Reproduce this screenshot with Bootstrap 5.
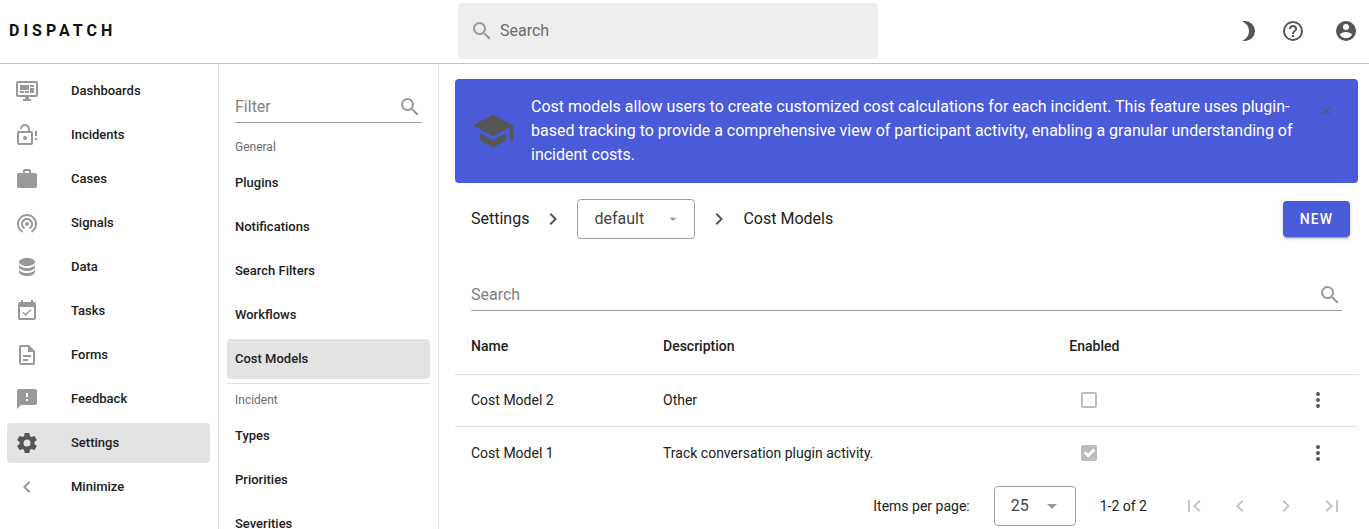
<!DOCTYPE html>
<html lang="en">
<head>
<meta charset="utf-8">
<meta name="viewport" content="width=device-width, initial-scale=1">
<title>Dispatch - Cost Models</title>
<link rel="stylesheet" href="https://cdn.jsdelivr.net/npm/bootstrap@5.3.0/dist/css/bootstrap.min.css">
<style>
:root { --ink: #212121; --muted: #999; --icon: #565656; --accent: #4a5bd9; --rule: #e0e0e0; }
body { font-family: Roboto, "Liberation Sans", sans-serif; font-size: 16px; line-height: 24px; color: var(--ink); background: #fff; }
svg { display: block; fill: currentColor; fill-rule: evenodd; flex: none; }
.ic { width: 24px; height: 24px; }
.text-icon { color: var(--icon); }
.text-faded { color: var(--muted); }
.topbar { height: 64px; border-bottom: 1px solid #c6c6c6; padding: 0 11px 2px 9px; }
.brand { flex: 0 1 449px; font-weight: 700; letter-spacing: 4px; color: #111; text-decoration: none; }
.top-search { flex: 0 1 420px; height: 56px; background: #eee; padding: 0 12px; gap: 6px; border-radius: 4px; }
.top-actions { gap: 21px; }
.plain-input { border: 0; outline: 0; background: transparent; padding: 0; min-width: 0; flex: 1; color: var(--ink); }
.plain-input::placeholder { color: #828282; opacity: 1; }
.top-search .plain-input::placeholder { color: #6c6c6c; }
.icon-button { border: 0; background: none; padding: 0; color: var(--icon); display: inline-flex; align-items: center; justify-content: center; vertical-align: middle; }
.side { flex: 0 0 220px; border-right: 1px solid var(--rule); overflow-y: auto; scrollbar-width: none; padding: 7px 8px; }
.side::-webkit-scrollbar { display: none; }
.side-main { flex-basis: 219px; padding-left: 7px; }
.side-link { display: flex; align-items: center; height: 40px; margin-bottom: 4px; padding: 0 8px; border-radius: 4px; font-size: 13px; font-weight: 500; line-height: 20px; color: var(--ink); text-decoration: none; flex: none; }
.side-link svg { color: var(--muted); margin-right: 32px; }
.side-link.active { background: #e3e3e3; }
.side-link.active svg { color: var(--icon); }
.side-label { height: 32px; padding: 0 8px; display: flex; align-items: center; font-size: 12px; line-height: 16px; color: #6c6c6c; margin: 0; flex: none; font-weight: 400; }
.side-group + .side-group { border-top: 1px solid var(--rule); }
.line-field { border-bottom: 1px solid #a0a0a0; height: 32px; }
.side .line-field { margin: 20px 8px 8px; }
.content-area { padding: 15px 11px 0 16px; overflow: hidden; min-width: 0; }
.notice { background: var(--accent); color: #fff; padding: 16px; border-radius: 4px; gap: 16px; margin: 0; border: 0; }
.notice-icon { width: 44px; height: 44px; color: var(--icon); }
.notice-close { width: 32px; height: 32px; }
.crumbs { gap: 12px; padding: 16px 8px 0 16px; }
.crumbs a { color: var(--ink); text-decoration: none; }
.pick { width: auto; height: 40px; border: 1px solid #a0a0a0; border-radius: 4px; color: #444; padding: 0 16px; background: no-repeat url("data:image/svg+xml,%3Csvg xmlns='http://www.w3.org/2000/svg' viewBox='0 0 24 24' fill='%23999'%3E%3Cpath d='M7 10l5 5 5-5z'/%3E%3C/svg%3E") right 13px center / 16px; }
.pick-project { width: 118px; }
.pick-size { width: 82px; background-size: 24px; background-position: right 11px center; }
.btn-new { --bs-btn-color: #fff; --bs-btn-bg: var(--accent); --bs-btn-hover-bg: #3f50cb; --bs-btn-hover-color: #fff; height: 36px; padding: 0 17px; border: 0; border-radius: 4px; font-size: 14px; font-weight: 500; letter-spacing: 1px; box-shadow: 0 3px 1px -2px #0003, 0 2px 2px #0002, 0 1px 5px #0002; }
.table-search { margin: 40px 16px 7px; }
.models { font-size: 14px; line-height: 20px; --bs-table-color: var(--ink); color: var(--ink); margin: 0; table-layout: fixed; }
.models th, .models td { padding: 0 16px; height: 52px; border: 0; vertical-align: middle; }
.models th { font-weight: 500; height: 56px; }
.models tr:last-child td { height: 54px; }
.models thead tr, .models tbody tr:not(:last-child) { border-bottom: 1px solid var(--rule); }
.col-name { width: 192px; }
.col-desc { width: 45%; }
.tick { width: 16px; height: 16px; margin: 0 0 0 12px; display: block; border: 2px solid #bdbdbd; border-radius: 2px; }
.tick.form-check-input[type=checkbox] { border-radius: 2px; }
.tick.form-check-input:disabled { opacity: 1; }
.tick.form-check-input:checked { background-color: #bdbdbd; border-color: #bdbdbd; background-size: 18px; background-position: center; }
.pager { font-size: 14px; line-height: 20px; padding: 6px 3px 8px; }
.pager .icon-button { width: 46px; height: 40px; color: #c6c6c6; }
</style>
</head>
<body class="vh-100 d-flex flex-column overflow-hidden">
<header class="topbar d-flex align-items-center flex-shrink-0">
  <a class="brand" href="#">DISPATCH</a>
  <label class="top-search d-flex align-items-center">
    <svg class="ic text-faded" viewBox="0 0 24 24"><path id="magnify" d="M9.5,3A6.5,6.5 0 0,1 16,9.5C16,11.11 15.41,12.59 14.44,13.73L14.71,14H15.5L20.5,19L19,20.5L14,15.5V14.71L13.73,14.44C12.59,15.41 11.11,16 9.5,16A6.5,6.5 0 0,1 3,9.5A6.5,6.5 0 0,1 9.5,3M9.5,5C7,5 5,7 5,9.5C5,12 7,14 9.5,14C12,14 14,12 14,9.5C14,7 12,5 9.5,5Z"/></svg>
    <input class="plain-input" type="text" placeholder="Search" aria-label="Search">
  </label>
  <div class="top-actions d-flex align-items-center ms-auto">
    <button class="icon-button" type="button" aria-label="Dark mode"><svg class="ic" viewBox="0 0 24 24"><path d="M9,2C7.95,2 6.95,2.16 6,2.46C10.06,3.73 13,7.5 13,12C13,16.5 10.06,20.27 6,21.54C6.95,21.84 7.95,22 9,22A10,10 0 0,0 19,12A10,10 0 0,0 9,2Z"/></svg></button>
    <button class="icon-button me-2" type="button" aria-label="Help"><svg class="ic" viewBox="0 0 24 24"><path d="M11,18H13V16H11V18M12,2A10,10 0 0,0 2,12A10,10 0 0,0 12,22A10,10 0 0,0 22,12A10,10 0 0,0 12,2M12,20C7.59,20 4,16.41 4,12C4,7.59 7.59,4 12,4C16.41,4 20,7.59 20,12C20,16.41 16.41,20 12,20M12,6A4,4 0 0,0 8,10H10A2,2 0 0,1 12,8A2,2 0 0,1 14,10C14,12 11,11.75 11,15H13C13,12.75 16,12.5 16,10A4,4 0 0,0 12,6Z"/></svg></button>
    <button class="icon-button" type="button" aria-label="Account"><svg class="ic" viewBox="0 0 24 24"><path d="M12,19.2C9.5,19.2 7.29,17.92 6,16C6.03,14 10,12.9 12,12.9C14,12.9 17.97,14 18,16C16.71,17.92 14.5,19.2 12,19.2M12,5A3,3 0 0,1 15,8A3,3 0 0,1 12,11A3,3 0 0,1 9,8A3,3 0 0,1 12,5M12,2A10,10 0 0,0 2,12A10,10 0 0,0 12,22A10,10 0 0,0 22,12C22,6.47 17.5,2 12,2Z"/></svg></button>
  </div>
</header>

<div class="d-flex flex-grow-1 overflow-hidden">
  <nav class="side side-main" aria-label="Main">
    <a class="side-link" href="#"><svg class="ic" viewBox="0 0 24 24"><path d="M21,16V4H3V16H21M21,2A2,2 0 0,1 23,4V16A2,2 0 0,1 21,18H14V20H16V22H8V20H10V18H3C1.89,18 1,17.1 1,16V4C1,2.89 1.89,2 3,2H21M5,6H14V11H5V6M15,6H19V8H15V6M19,9V14H15V9H19M5,12H9V14H5V12M10,12H14V14H10V12Z"/></svg>Dashboards</a>
    <a class="side-link" href="#"><svg class="ic" viewBox="0 0 24 24"><path d="M10,13A2,2 0 0,1 10,17A2,2 0 0,1 10,13M16,20V10H4V20H16M16,8A2,2 0 0,1 18,10V20A2,2 0 0,1 16,22H4A2,2 0 0,1 2,20V10A2,2 0 0,1 4,8H13V6A3,3 0 0,0 7,6H5A5,5 0 0,1 15,6V8H16M20,8H22V13H20V8M20,15H22V17H20V15Z"/></svg>Incidents</a>
    <a class="side-link" href="#"><svg class="ic" viewBox="0 0 24 24"><path d="M10,2H14A2,2 0 0,1 16,4V6H20A2,2 0 0,1 22,8V19A2,2 0 0,1 20,21H4C2.89,21 2,20.1 2,19V8C2,6.89 2.89,6 4,6H8V4C8,2.89 8.89,2 10,2M14,6V4H10V6H14Z"/></svg>Cases</a>
    <a class="side-link" href="#"><svg class="ic" viewBox="0 0 24 24"><path d="M12 11c-1.1 0-2 .9-2 2s.9 2 2 2 2-.9 2-2-.9-2-2-2zm6 2c0-3.31-2.69-6-6-6s-6 2.69-6 6c0 2.22 1.21 4.15 3 5.19l1-1.74c-1.19-.7-2-1.97-2-3.45 0-2.21 1.79-4 4-4s4 1.79 4 4c0 1.48-.81 2.75-2 3.45l1 1.74c1.79-1.04 3-2.97 3-5.19zM12 3C6.48 3 2 7.48 2 13c0 3.7 2.01 6.92 4.99 8.65l1-1.73C5.61 18.53 4 15.96 4 13c0-4.42 3.58-8 8-8s8 3.58 8 8c0 2.96-1.61 5.53-4 6.92l1 1.73c2.99-1.73 5-4.95 5-8.65 0-5.52-4.48-10-10-10z"/></svg>Signals</a>
    <a class="side-link" href="#"><svg class="ic" viewBox="0 0 24 24"><path d="M12,3C7.58,3 4,4.79 4,7C4,9.21 7.58,11 12,11C16.42,11 20,9.21 20,7C20,4.79 16.42,3 12,3M4,9V12C4,14.21 7.58,16 12,16C16.42,16 20,14.21 20,12V9C20,11.21 16.42,13 12,13C7.58,13 4,11.21 4,9M4,14V17C4,19.21 7.58,21 12,21C16.42,21 20,19.21 20,17V14C20,16.21 16.42,18 12,18C7.58,18 4,16.21 4,14Z"/></svg>Data</a>
    <a class="side-link" href="#"><svg class="ic" viewBox="0 0 24 24"><path d="M19,3H18V1H16V3H8V1H6V3H5A2,2 0 0,0 3,5V19A2,2 0 0,0 5,21H19A2,2 0 0,0 21,19V5A2,2 0 0,0 19,3M19,19H5V8H19V19M16.53,11.06L15.47,10L10.59,14.88L8.47,12.76L7.41,13.82L10.59,17L16.53,11.06Z"/></svg>Tasks</a>
    <a class="side-link" href="#"><svg class="ic" viewBox="0 0 24 24"><path d="M6,2A2,2 0 0,0 4,4V20A2,2 0 0,0 6,22H18A2,2 0 0,0 20,20V8L14,2H6M6,4H13V9H18V20H6V4M8,12V14H16V12H8M8,16V18H13V16H8Z"/></svg>Forms</a>
    <a class="side-link" href="#"><svg class="ic" viewBox="0 0 24 24"><path d="M13,10H11V6H13V10M13,14H11V12H13V14M20,2H4A2,2 0 0,0 2,4V22L6,18H20A2,2 0 0,0 22,16V4C22,2.89 21.1,2 20,2Z"/></svg>Feedback</a>
    <a class="side-link active" href="#" aria-current="page"><svg class="ic" viewBox="0 0 24 24"><path d="M12,15.5A3.5,3.5 0 0,1 8.5,12A3.5,3.5 0 0,1 12,8.5A3.5,3.5 0 0,1 15.5,12A3.5,3.5 0 0,1 12,15.5M19.43,12.97C19.47,12.65 19.5,12.33 19.5,12C19.5,11.67 19.47,11.34 19.43,11L21.54,9.37C21.73,9.22 21.78,8.95 21.66,8.73L19.66,5.27C19.54,5.05 19.27,4.96 19.05,5.05L16.56,6.05C16.04,5.66 15.5,5.32 14.87,5.07L14.5,2.42C14.46,2.18 14.25,2 14,2H10C9.75,2 9.54,2.18 9.5,2.42L9.13,5.07C8.5,5.32 7.96,5.66 7.44,6.05L4.95,5.05C4.73,4.96 4.46,5.05 4.34,5.27L2.34,8.73C2.21,8.95 2.27,9.22 2.46,9.37L4.57,11C4.53,11.34 4.5,11.67 4.5,12C4.5,12.33 4.53,12.65 4.57,12.97L2.46,14.63C2.27,14.78 2.21,15.05 2.34,15.27L4.34,18.73C4.46,18.95 4.73,19.03 4.95,18.95L7.44,17.94C7.96,18.34 8.5,18.68 9.13,18.93L9.5,21.58C9.54,21.82 9.75,22 10,22H14C14.25,22 14.46,21.82 14.5,21.58L14.87,18.93C15.5,18.67 16.04,18.34 16.56,17.94L19.05,18.95C19.27,19.03 19.54,18.95 19.66,18.73L21.66,15.27C21.78,15.05 21.73,14.78 21.54,14.63L19.43,12.97Z"/></svg>Settings</a>
    <a class="side-link" href="#"><svg class="ic" viewBox="0 0 24 24"><path d="M15.41,16.58L10.83,12L15.41,7.41L14,6L8,12L14,18L15.41,16.58Z"/></svg>Minimize</a>
  </nav>

  <nav class="side" aria-label="Settings">
    <label class="line-field d-flex align-items-center">
      <input class="plain-input" type="text" placeholder="Filter" aria-label="Filter">
      <svg class="ic text-faded" viewBox="0 0 24 24"><use href="#magnify"/></svg>
    </label>
    <div class="side-group">
      <h2 class="side-label">General</h2>
      <a class="side-link" href="#">Plugins</a>
      <a class="side-link" href="#">Notifications</a>
      <a class="side-link" href="#">Search Filters</a>
      <a class="side-link" href="#">Workflows</a>
      <a class="side-link active" href="#" aria-current="page">Cost Models</a>
    </div>
    <div class="side-group">
      <h2 class="side-label">Incident</h2>
      <a class="side-link" href="#">Types</a>
      <a class="side-link" href="#">Priorities</a>
      <a class="side-link" href="#">Severities</a>
    </div>
  </nav>

  <main class="content-area flex-grow-1">
    <div class="alert notice d-flex align-items-start" role="alert">
      <svg class="notice-icon align-self-center" viewBox="0 0 24 24"><path d="M12,3L1,9L12,15L21,10.09V17H23V9M5,13.18V17.18L12,21L19,17.18V13.18L12,17L5,13.18Z"/></svg>
      <div class="flex-grow-1">Cost models allow users to create customized cost calculations for each incident. This feature uses plugin-based tracking to provide a comprehensive view of participant activity, enabling a granular understanding of incident costs.</div>
      <button class="icon-button notice-close flex-shrink-0" type="button" aria-label="Close"><svg width="14" height="14" viewBox="0 0 24 24"><path d="M19,6.41L17.59,5L12,10.59L6.41,5L5,6.41L10.59,12L5,17.59L6.41,19L12,13.41L17.59,19L19,17.59L13.41,12L19,6.41Z"/></svg></button>
    </div>

    <div class="crumbs d-flex align-items-center">
      <a href="#">Settings</a>
      <svg class="ic text-icon" viewBox="0 0 24 24"><path id="next" d="M8.59,16.58L13.17,12L8.59,7.41L10,6L16,12L10,18L8.59,16.58Z"/></svg>
      <select class="form-select pick pick-project" aria-label="Project"><option>default</option></select>
      <svg class="ic text-icon" viewBox="0 0 24 24"><use href="#next"/></svg>
      <span>Cost Models</span>
      <button class="btn btn-new ms-auto" type="button">NEW</button>
    </div>

    <label class="line-field table-search d-flex align-items-center">
      <input class="plain-input" type="text" placeholder="Search" aria-label="Search cost models">
      <svg class="ic text-faded" viewBox="0 0 24 24"><use href="#magnify"/></svg>
    </label>

    <table class="table models">
      <thead><tr><th class="col-name" scope="col">Name</th><th class="col-desc" scope="col">Description</th><th scope="col">Enabled</th><th scope="col" aria-label="Actions"></th></tr></thead>
      <tbody>
        <tr>
          <td>Cost Model 2</td><td>Other</td>
          <td><input class="form-check-input tick" type="checkbox" disabled aria-label="Cost Model 2 enabled"></td>
          <td class="text-end"><button class="icon-button" type="button" aria-label="Cost Model 2 actions"><svg width="48" height="24" viewBox="0 0 48 24"><path id="dots" d="M24,16A2,2 0 0,1 24,20A2,2 0 0,1 24,16M24,10A2,2 0 0,1 24,14A2,2 0 0,1 24,10M24,4A2,2 0 0,1 24,8A2,2 0 0,1 24,4Z"/></svg></button></td>
        </tr>
        <tr>
          <td>Cost Model 1</td><td>Track conversation plugin activity.</td>
          <td><input class="form-check-input tick" type="checkbox" checked disabled aria-label="Cost Model 1 enabled"></td>
          <td class="text-end"><button class="icon-button" type="button" aria-label="Cost Model 1 actions"><svg width="48" height="24" viewBox="0 0 48 24"><use href="#dots"/></svg></button></td>
        </tr>
      </tbody>
    </table>

    <div class="pager d-flex align-items-center justify-content-end">
      <label for="page-size" class="me-4">Items per page:</label>
      <select id="page-size" class="form-select pick pick-size me-4"><option>25</option></select>
      <span class="me-4">1-2 of 2</span>
      <button class="icon-button" type="button" disabled aria-label="First page"><svg class="ic" viewBox="0 0 24 24"><path d="M18.41,16.59L13.82,12L18.41,7.41L17,6L11,12L17,18L18.41,16.59M6,6H8V18H6V6Z"/></svg></button>
      <button class="icon-button" type="button" disabled aria-label="Previous page"><svg class="ic" viewBox="0 0 24 24"><path d="M15.41,16.58L10.83,12L15.41,7.41L14,6L8,12L14,18L15.41,16.58Z"/></svg></button>
      <button class="icon-button" type="button" disabled aria-label="Next page"><svg class="ic" viewBox="0 0 24 24"><use href="#next"/></svg></button>
      <button class="icon-button" type="button" disabled aria-label="Last page"><svg class="ic" viewBox="0 0 24 24"><path d="M5.59,7.41L10.18,12L5.59,16.59L7,18L13,12L7,6L5.59,7.41M16,6H18V18H16V6Z"/></svg></button>
    </div>
  </main>
</div>
<script src="https://cdn.jsdelivr.net/npm/bootstrap@5.3.0/dist/js/bootstrap.bundle.min.js"></script>
</body>
</html>
